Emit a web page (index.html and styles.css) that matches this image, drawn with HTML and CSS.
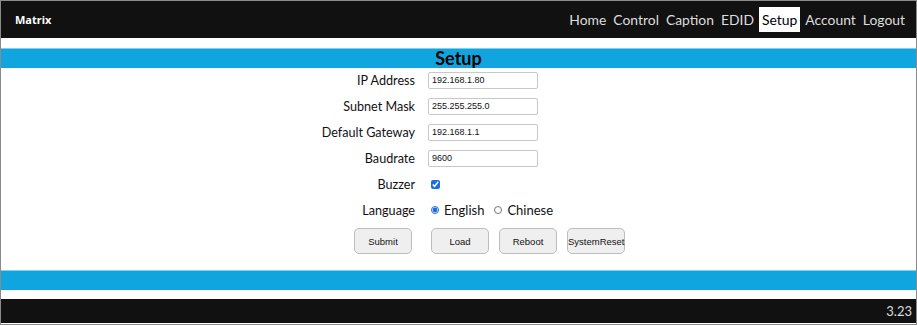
FILE: index.html
```html
<!DOCTYPE html>
<html lang="en">
<head>
    <meta charset="UTF-8">
    <meta name="viewport" content="width=device-width, initial-scale=1.0">
    <title>Matrix Setup</title>
    <link rel="stylesheet" href="styles.css">
</head>
<body>
    <div class="page">
        <div class="header">
            <div class="brand">Matrix</div>
            <div class="nav">
                <a href="#">Home</a>
                <a href="#">Control</a>
                <a href="#">Caption</a>
                <a href="#">EDID</a>
                <a href="#" class="active">Setup</a>
                <a href="#">Account</a>
                <a href="#">Logout</a>
            </div>
        </div>

        <div class="bar">Setup</div>

        <form class="setup-form">
            <label class="label">IP Address</label>
            <div class="field"><input type="text" value="192.168.1.80"></div>

            <label class="label">Subnet Mask</label>
            <div class="field"><input type="text" value="255.255.255.0"></div>

            <label class="label">Default Gateway</label>
            <div class="field"><input type="text" value="192.168.1.1"></div>

            <label class="label">Baudrate</label>
            <div class="field"><input type="text" value="9600"></div>

            <label class="label">Buzzer</label>
            <div class="field"><input type="checkbox" checked></div>

            <label class="label">Language</label>
            <div class="field radios">
                <label><input type="radio" name="lang" checked> English</label>
                <label><input type="radio" name="lang"> Chinese</label>
            </div>
        </form>

        <div class="buttons">
            <button class="btn submit">Submit</button>
            <button class="btn">Load</button>
            <button class="btn">Reboot</button>
            <button class="btn">SystemReset</button>
        </div>

        <div class="bar bar-bottom"></div>

        <div class="footer">3.23</div>
    </div>
</body>
</html>
```

FILE: styles.css
```css
* {
    margin: 0;
    padding: 0;
    box-sizing: border-box;
}

body {
    font-family: Lato, "Noto Sans", sans-serif;
    background: #fff;
}

.page {
    width: 917px;
    height: 325px;
    border: 1px solid #8a8a8a;
    display: flex;
    flex-direction: column;
}

.header {
    height: 37px;
    background: #111;
    display: flex;
    align-items: center;
    justify-content: space-between;
    padding: 0 9px 0 14px;
}

.brand {
    color: #fff;
    font-family: "Noto Sans", sans-serif;
    font-weight: bold;
    font-size: 11px;
}

.nav {
    display: flex;
    align-items: center;
    gap: 3px;
}

.nav a {
    color: #ddd;
    text-decoration: none;
    font-size: 13.9px;
    padding: 0 2px;
    line-height: 25px;
}

.nav a.active {
    background: #fff;
    color: #000;
    padding: 0 3px;
}

.bar {
    margin-top: 10px;
    height: 20px;
    background: #10a5df;
    border-top: 1px solid #7fd0ef;
    color: #000;
    text-align: center;
    font-weight: bold;
    font-size: 18px;
    line-height: 18px;
}

.setup-form {
    display: grid;
    grid-template-columns: 414px 1fr;
    column-gap: 13px;
    grid-auto-rows: 26px;
    align-items: center;
    margin-top: -1px;
}

.label {
    text-align: right;
    font-size: 12.6px;
    color: #111;
}

.field {
    display: flex;
    align-items: center;
}

.field input[type="text"] {
    width: 110px;
    height: 17px;
    border: 1px solid #c8c8c8;
    border-radius: 2px;
    font-family: "Liberation Sans", Arial, sans-serif;
    font-size: 9px;
    padding: 0 3px;
    color: #111;
}

.field input[type="checkbox"] {
    width: 9px;
    height: 9px;
    margin-left: 3px;
    accent-color: #1a6fe0;
}

.radios {
    gap: 7px;
    font-size: 13px;
    color: #111;
}

.radios label {
    display: flex;
    align-items: center;
    gap: 5px;
}

.radios input {
    width: 8px;
    height: 8px;
    margin-left: 3px;
    accent-color: #1a6fe0;
}

.buttons {
    display: flex;
    gap: 10px;
    padding-left: 353px;
    margin-top: 5px;
}

.btn {
    width: 58px;
    height: 26px;
    background: #efefef;
    border: 1px solid #bdbdbd;
    border-radius: 5px;
    font-family: "Liberation Sans", Arial, sans-serif;
    font-size: 9.5px;
    color: #111;
}

.btn.submit {
    margin-right: 9px;
}

.bar-bottom {
    margin-top: 16px;
    height: 20px;
}

.footer {
    margin-top: 9px;
    height: 24px;
    background: #111;
    color: #ddd;
    font-size: 13px;
    text-align: right;
    padding-right: 4px;
    line-height: 24px;
}
```
